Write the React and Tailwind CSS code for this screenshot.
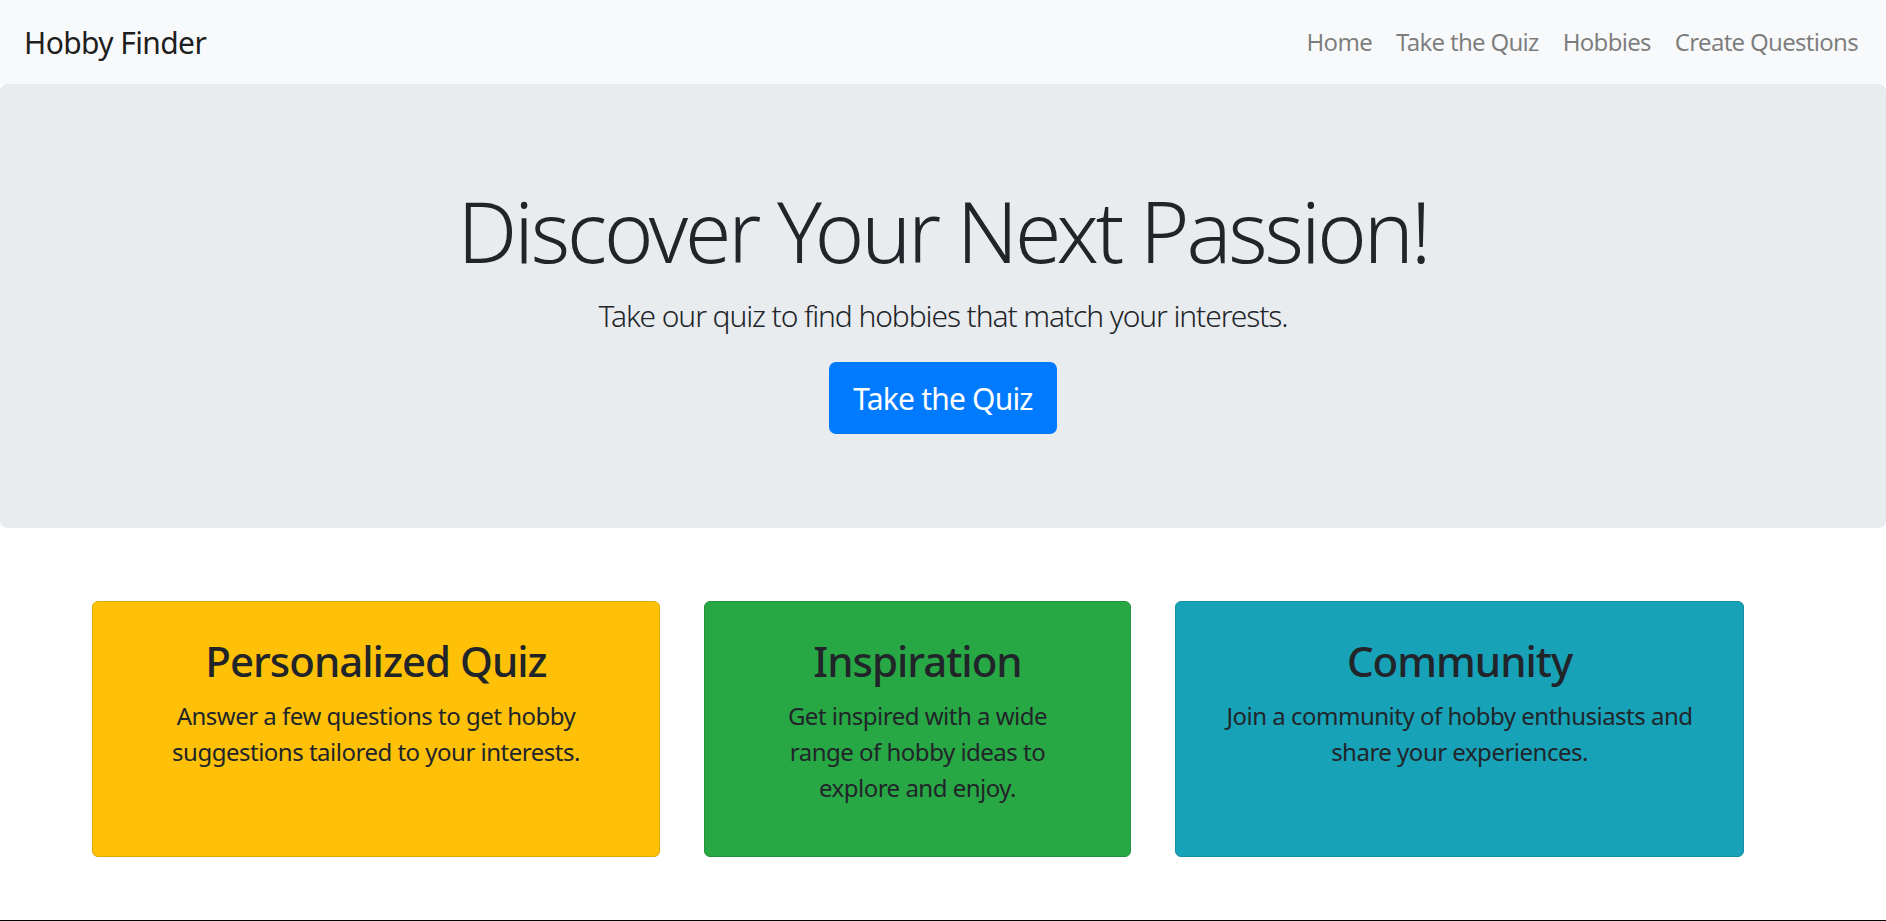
export default function App() {
  const cards = [
    {
      title: "Personalized Quiz",
      lines: ["Answer a few questions to get hobby", "suggestions tailored to your interests."],
      cls: "w-[568px] bg-[#ffc107] border-[#dfa906]",
    },
    {
      title: "Inspiration",
      lines: ["Get inspired with a wide", "range of hobby ideas to", "explore and enjoy."],
      cls: "w-[427px] bg-[#28a745] border-[#23923c]",
    },
    {
      title: "Community",
      lines: ["Join a community of hobby enthusiasts and", "share your experiences."],
      cls: "w-[569px] bg-[#17a2b8] border-[#148ea1]",
    },
  ];
  return (
    <div className="h-[921px] flex flex-col bg-white border-b border-black font-['Noto_Sans','Open_Sans',sans-serif] text-[#212529] overflow-hidden">
      <nav className="h-[84px] shrink-0 bg-[#f8f9fa] flex items-center justify-between pl-[24px] pr-[16px]">
        <a className="text-[30px] leading-[45px] tracking-[-0.6px] text-black/90">Hobby Finder</a>
        <ul className="flex items-center">
          {["Home", "Take the Quiz", "Hobbies", "Create Questions"].map((t) => (
            <li key={t}>
              <a className="block px-[12px] text-[24px] leading-[36px] tracking-[-0.7px] text-black/50">{t}</a>
            </li>
          ))}
        </ul>
      </nav>
      <section className="h-[444px] shrink-0 bg-[#e9ecef] rounded-[7px] pt-[96px] flex flex-col items-center text-center">
        <h1 className="text-[84px] leading-[101px] font-light tracking-[-3.1px] mb-[12px]">
          Discover Your Next Passion!
        </h1>
        <p className="text-[30px] leading-[45px] font-light tracking-[-1.1px] mb-[24px]">
          Take our quiz to find hobbies that match your interests.
        </p>
        <a className="inline-flex items-center justify-center w-[228px] h-[72px] rounded-[7px] bg-[#007bff] text-white text-[30px] tracking-[-0.8px]">
          Take the Quiz
        </a>
      </section>
      <div className="flex gap-[44px] pl-[92px] mt-[73px]">
        {cards.map((c) => (
          <div key={c.title} className={`h-[256px] border rounded-[6px] p-[30px] text-center ${c.cls}`}>
            <h2 className="text-[42px] leading-[58px] font-medium tracking-[-1px] mb-[8px]">{c.title}</h2>
            <p className="text-[24px] leading-[36px] tracking-[-0.5px]">
              {c.lines.map((l, i) => (
                <span key={i} className="block whitespace-nowrap">{l}</span>
              ))}
            </p>
          </div>
        ))}
      </div>
    </div>
  );
}
